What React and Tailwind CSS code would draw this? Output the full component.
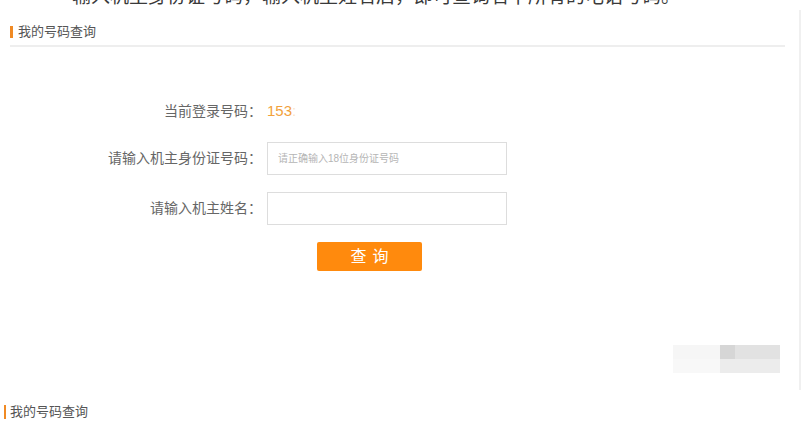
export default function App() {
  return (
    <div className="w-[806px] h-[425px] overflow-hidden bg-white font-['Liberation_Sans','Noto_Sans_CJK_SC',sans-serif]">
      {/* caption of the article above, only its lower part is in frame */}
      <div className="h-[10px] overflow-hidden">
        <p className="-mt-[14px] pl-[72px] text-[19px] leading-[22px] text-[#3a3a3a] whitespace-nowrap">
          输入机主身份证号码，输入机主姓名后，即可查询名下所有的电话号码。
        </p>
      </div>

      {/* query panel */}
      <div className="relative w-[801px] h-[380px] border-r-2 border-[#f0f0f0]">
        <div className="flex items-center gap-[5px] pl-[10px] pt-[16px]">
          <span className="w-[3px] h-[12px] bg-[#f08a24]" />
          <span className="text-[13px] leading-[12px] text-[#555]">我的号码查询</span>
        </div>
        <div className="mt-[7px] ml-[10px] w-[775px] h-[2px] bg-[#eeeeee]" />

        <div className="mt-[48px] flex items-center h-[33px]">
          <span className="w-[262px] text-right text-[14px] text-[#666]">当前登录号码：</span>
          <span className="ml-[5px] text-[15px] text-[#f2a13c]">
            153<span className="opacity-30">:</span>
          </span>
        </div>

        <div className="mt-[14px] flex items-center h-[33px]">
          <span className="w-[262px] text-right text-[14px] text-[#666]">请输入机主身份证号码：</span>
          <input
            className="ml-[5px] w-[240px] h-[33px] border border-[#dddddd] pl-[10px] text-[10px] outline-none placeholder:text-[#b5b5b5]"
            placeholder="请正确输入18位身份证号码"
          />
        </div>

        <div className="mt-[17px] flex items-center h-[33px]">
          <span className="w-[262px] text-right text-[14px] text-[#666]">请输入机主姓名：</span>
          <input className="ml-[5px] w-[240px] h-[33px] border border-[#dddddd] pl-[10px] text-[12px] outline-none" />
        </div>

        <button className="mt-[17px] ml-[317px] w-[105px] h-[29px] rounded-[2px] bg-[#ff8a0d] text-white text-[16px] tracking-[6px] pl-[6px]">
          查询
        </button>

        {/* blurred watermark */}
        <div className="absolute left-[673px] top-[335px] flex">
          <div className="flex flex-col">
            <div className="w-[47px] h-[14px] bg-[#f6f6f6]" />
            <div className="w-[47px] h-[14px] bg-[#f8f8f8]" />
          </div>
          <div className="flex flex-col">
            <div className="flex">
              <div className="w-[15px] h-[14px] bg-[#d6d6d6]" />
              <div className="w-[45px] h-[14px] bg-[#e2e2e2]" />
            </div>
            <div className="w-[60px] h-[14px] bg-[#ececec]" />
          </div>
        </div>
      </div>

      {/* next section */}
      <div className="mt-[15px] flex items-center gap-[4px] pl-[4px]">
        <span className="w-[2px] h-[14px] bg-[#f08a24]" />
        <span className="text-[13px] leading-[14px] text-[#555]">我的号码查询</span>
      </div>
    </div>
  );
}
